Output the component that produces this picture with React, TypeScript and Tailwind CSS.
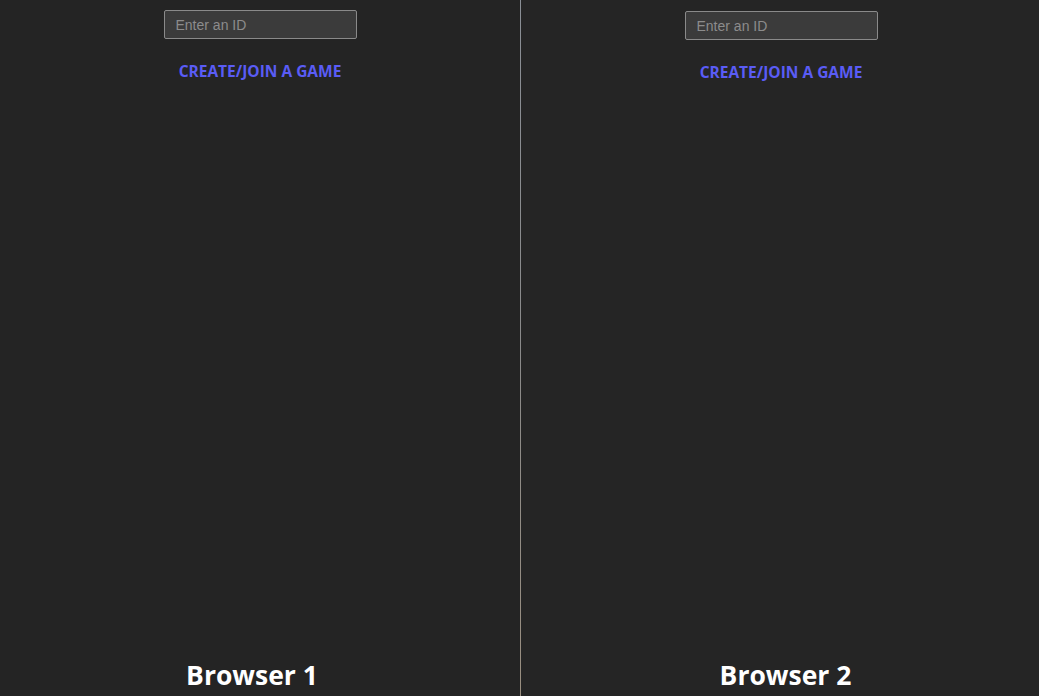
import React from "react";

function Pane({ label, top, labelShift, pad }: { label: string; top: string; labelShift: string; pad: string }) {
  return (
    <div className={`flex flex-1 flex-col items-center h-full ${pad}`}>
      <div className={`flex flex-col items-center ${top}`}>
        <input
          placeholder="Enter an ID"
          className="w-[193px] h-[29px] bg-[#3b3b3b] border border-[#8a8a8a] rounded-[2px] px-[11px] text-[14px] text-[#cfcfcf] placeholder-[#8c8c8c] outline-none"
          style={{ fontFamily: "Arial, 'Liberation Sans', sans-serif" }}
        />
        <button
          className="mt-[22px] text-[15.5px] font-bold text-[#5a5cf6] leading-[20px]"
          style={{ fontFamily: "'Open Sans', 'Noto Sans', sans-serif" }}
        >
          CREATE/JOIN A GAME
        </button>
      </div>
      <div
        className={`mt-auto mb-[4px] text-[26.5px] font-bold text-white leading-[34px] ${labelShift}`}
        style={{ fontFamily: "'Open Sans', 'Noto Sans', sans-serif" }}
      >
        {label}
      </div>
    </div>
  );
}

export default function App() {
  return (
    <div className="w-[1039px] h-[696px] bg-[#242424] flex overflow-hidden">
      <div className="w-[520px] h-full flex">
        <Pane label="Browser 1" top="mt-[10px]" labelShift="-ml-[16px]" pad="" />
      </div>
      <div className="w-[1px] h-full bg-gradient-to-b from-[#8a8f96] via-[#8a8a8a] to-[#9a8f80]" />
      <div className="flex-1 h-full flex bg-[#252525]">
        <Pane label="Browser 2" top="mt-[11px]" labelShift="ml-[9px]" pad="pl-[2px]" />
      </div>
    </div>
  );
}
